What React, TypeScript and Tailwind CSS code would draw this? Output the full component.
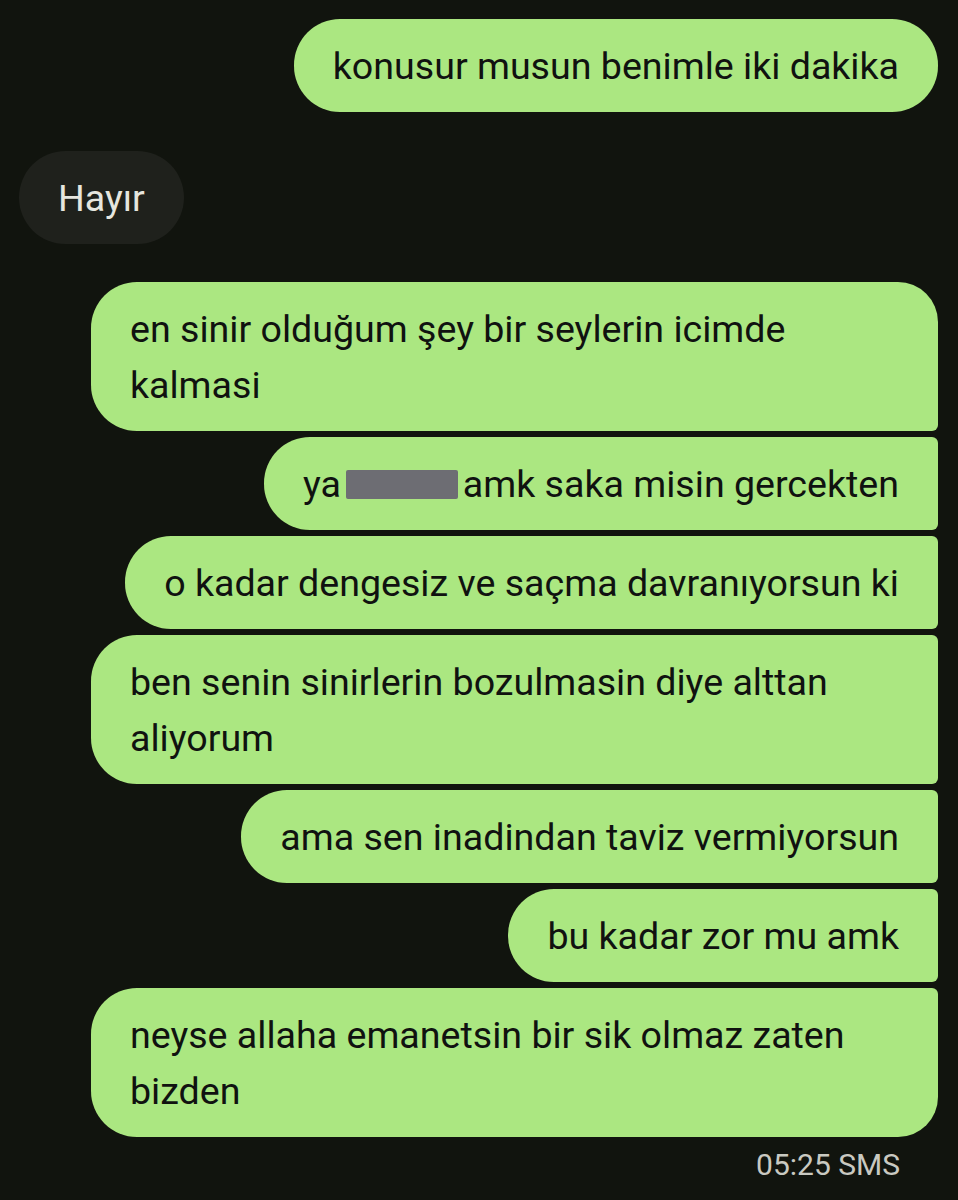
import type { ReactNode } from "react";

type Corner = "single" | "first" | "middle" | "last";

const RIGHT: Record<Corner, string> = {
  single: "rounded-r-[46px]",
  first: "rounded-tr-[40px] rounded-br-[6px]",
  middle: "rounded-r-[6px]",
  last: "rounded-tr-[6px] rounded-br-[40px]",
};

function Sent({ corner, children }: { corner: Corner; children: ReactNode }) {
  return (
    <div className="flex justify-end">
      <div
        className={`max-w-[847px] rounded-l-[46px] ${RIGHT[corner]} bg-[#abe781] px-[39px] pt-[19px] pb-[18px] text-[37.6px] leading-[56px] text-[#101210]`}
      >
        {children}
      </div>
    </div>
  );
}

function Received({ children }: { children: ReactNode }) {
  return (
    <div className="flex justify-start">
      <div className="rounded-full bg-[#1f211c] px-[39px] pt-[19px] pb-[18px] text-[37.6px] leading-[56px] text-[#e6e6df]">
        {children}
      </div>
    </div>
  );
}

export default function App() {
  return (
    <div
      className="min-h-[1200px] w-[958px] bg-[#11140e] pt-[19px] pr-[20px] pl-[19px]"
      style={{ fontFamily: "Roboto, 'Noto Sans', sans-serif" }}
    >
      <Sent corner="single">konusur musun benimle iki dakika</Sent>

      <div className="mt-[39px]">
        <Received>Hayır</Received>
      </div>

      <div className="mt-[38px] flex flex-col gap-[6px]">
        <Sent corner="first">en sinir olduğum şey bir seylerin icimde kalmasi</Sent>
        <Sent corner="middle">
          ya
          <span className="mx-[5px] inline-block h-[29px] w-[112px] translate-y-[2px] rounded-[2px] bg-[#6d6d73] align-baseline" />
          amk saka misin gercekten
        </Sent>
        <Sent corner="middle">o kadar dengesiz ve saçma davranıyorsun ki</Sent>
        <Sent corner="middle">ben senin sinirlerin bozulmasin diye alttan aliyorum</Sent>
        <Sent corner="middle">ama sen inadindan taviz vermiyorsun</Sent>
        <Sent corner="middle">bu kadar zor mu amk</Sent>
        <Sent corner="last">neyse allaha emanetsin bir sik olmaz zaten bizden</Sent>
      </div>

      <div className="mt-[10px] flex justify-end pr-[38px] text-[30px] leading-[36px] text-[#c9c9c1]">
        05:25 SMS
      </div>
    </div>
  );
}
